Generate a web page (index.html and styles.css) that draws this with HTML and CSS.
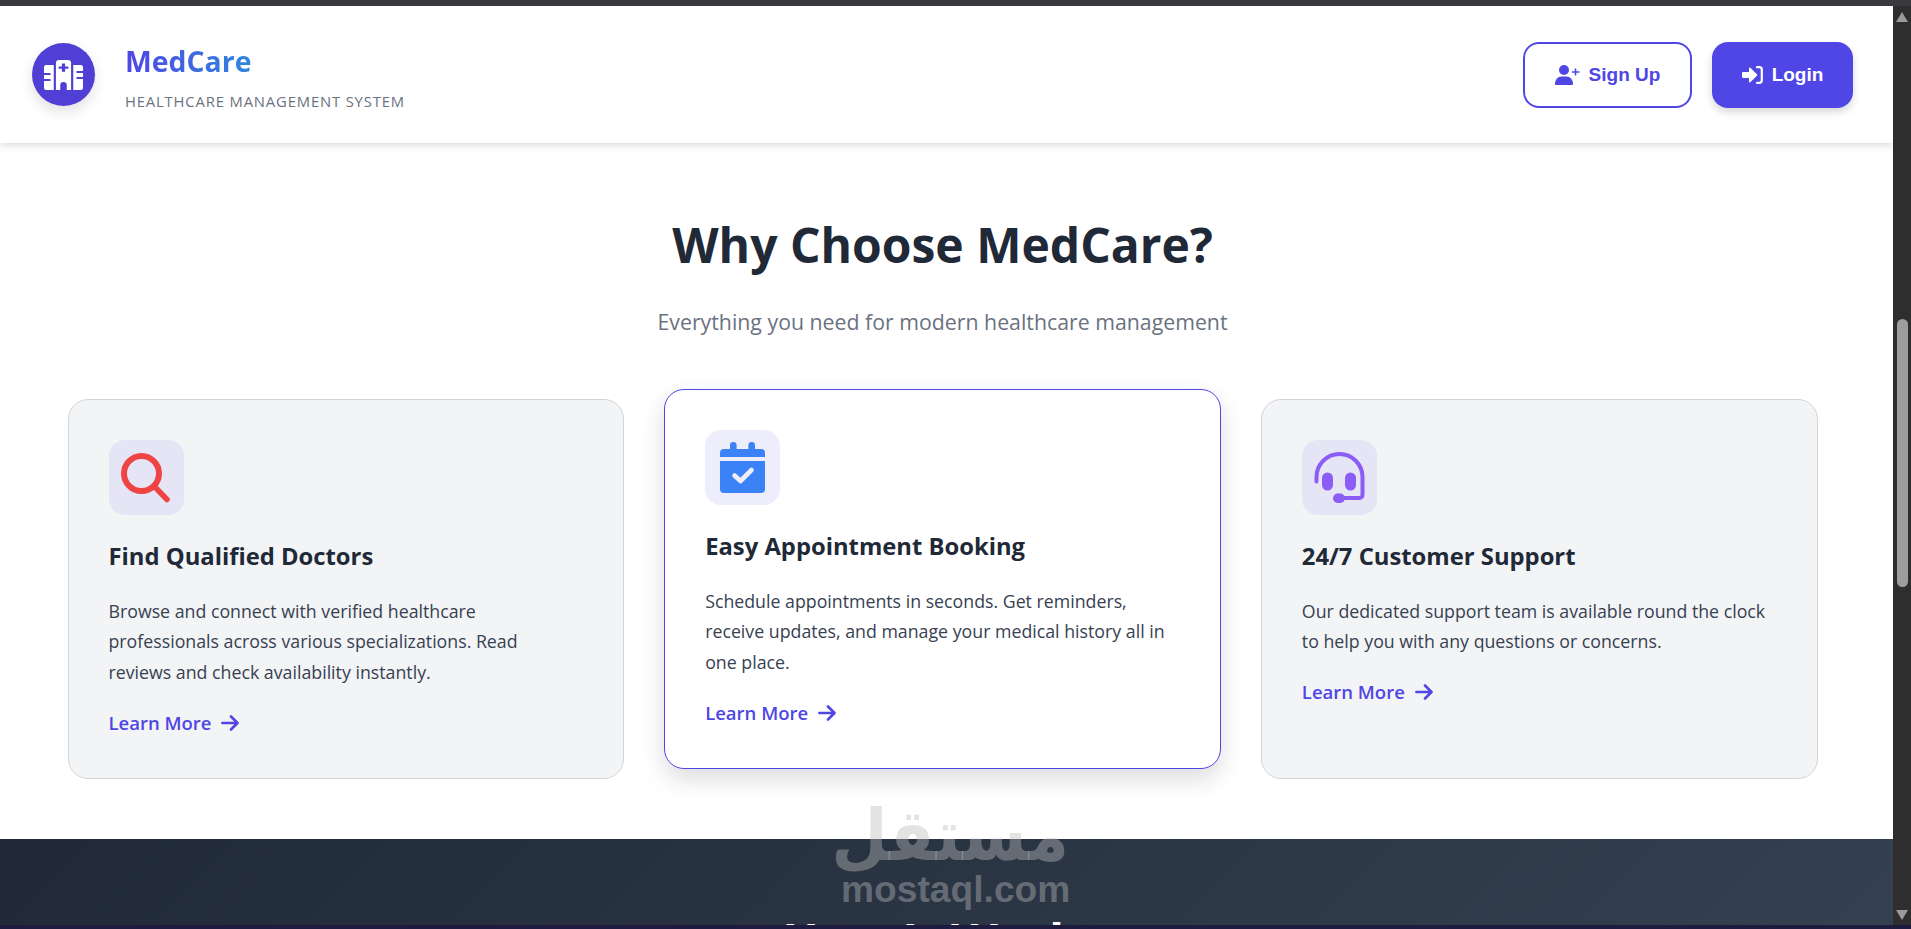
FILE: index.html
```html
<!DOCTYPE html>
<html lang="en">

<head>
    <meta charset="UTF-8">
    <meta name="viewport" content="width=device-width, initial-scale=1.0">
    <title>MedCare</title>
    <link rel="stylesheet" href="styles.css">
</head>

<body>
    <div class="topline"></div>
    <div class="window">
        <div class="page">
            <header class="header">
                <div class="brand">
                    <div class="logo">
                        <svg width="39" height="30" viewBox="0 0 36 30" preserveAspectRatio="none">
                            <path fill="#fff" fill-rule="evenodd" d="M11 3a3 3 0 0 1 3-3h8a3 3 0 0 1 3 3v27h-4v-5a3 3 0 0 0-6 0v5h-4zM16.500 3.500v3h-3v2.200h3v3h3v-3h3V6.500h-3v-3zM0 7a2 2 0 0 1 2-2h7v25H2a2 2 0 0 1-2-2v-7h6v-2H0v-4h6v-2H0zM27 5h7a2 2 0 0 1 2 2v4h-6v2h6v4h-6v2h6v9a2 2 0 0 1-2 2h-7z" />
                        </svg>
                    </div>
                    <div class="brand-text">
                        <div class="brand-name">MedCare</div>
                        <div class="brand-sub">HEALTHCARE MANAGEMENT SYSTEM</div>
                    </div>
                </div>
                <div class="actions">
                    <button class="btn btn-outline">
                        <svg width="25" height="20" viewBox="0 0 25 20">
                            <circle cx="9" cy="5" r="5" fill="#4f46e5" />
                            <path fill="#4f46e5" d="M0 19c0-4.500 3-7.500 6.500-7.500h5c3.500 0 6.500 3 6.500 7.500 0 .6-.4 1-1 1H1c-.6 0-1-.4-1-1z" />
                            <path stroke="#4f46e5" stroke-width="1.600" d="M20.500 3.500v7M17 7h7.500" />
                        </svg>
                        Sign Up
                    </button>
                    <button class="btn btn-solid">
                        <svg width="21" height="18" viewBox="0 0 21 18">
                            <path fill="#fff" d="M7 2.500v3.500H1.200C.5 6 0 6.500 0 7.200v3.600c0 .7.500 1.200 1.200 1.200H7v3.500c0 .8 1 1.200 1.600.6l6.500-6.500a1 1 0 0 0 0-1.200L8.600 1.900C8 1.300 7 1.700 7 2.500z" />
                            <path fill="none" stroke="#fff" stroke-width="2.200" stroke-linecap="round" d="M15 1.200h2.300c1.400 0 2.500 1.100 2.500 2.500v10.600c0 1.400-1.100 2.500-2.500 2.500H15" />
                        </svg>
                        Login
                    </button>
                </div>
            </header>

            <section class="why">
                <h1>Why Choose MedCare?</h1>
                <p class="lead">Everything you need for modern healthcare management</p>
                <div class="cards">
                    <div class="card">
                        <div class="icon-box">
                            <svg width="50" height="50" viewBox="0 0 50 50">
                                <circle cx="20.500" cy="20.500" r="17.500" fill="none" stroke="#ef4444" stroke-width="6" />
                                <path stroke="#ef4444" stroke-width="5.500" stroke-linecap="round" d="M33 33l13 13.500" />
                            </svg>
                        </div>
                        <h3>Find Qualified Doctors</h3>
                        <p>Browse and connect with verified healthcare professionals across various specializations. Read reviews and check availability instantly.</p>
                        <a class="more">Learn More
                            <svg width="18" height="16" viewBox="0 0 18 16">
                                <path fill="none" stroke="#4f46e5" stroke-width="2.600" stroke-linecap="round" stroke-linejoin="round" d="M1.400 8h15M10 1.500L16.500 8 10 14.500" />
                            </svg>
                        </a>
                    </div>
                    <div class="card card-active">
                        <div class="icon-box">
                            <svg width="45" height="51" viewBox="0 0 45 51">
                                <path fill="#3b82f6" d="M10 3.300a3.300 3.300 0 0 1 6.600 0V7h11.800V3.300a3.300 3.300 0 0 1 6.600 0V7h6a4 4 0 0 1 4 4v4H0v-4a4 4 0 0 1 4-4h6zM0 19h45v28a4 4 0 0 1-4 4H4a4 4 0 0 1-4-4z" />
                                <path fill="none" stroke="#eeedfb" stroke-width="4.600" stroke-linecap="round" stroke-linejoin="round" d="M14.500 33.500l6 5.500 11-11" />
                            </svg>
                        </div>
                        <h3>Easy Appointment Booking</h3>
                        <p>Schedule appointments in seconds. Get reminders, receive updates, and manage your medical history all in one place.</p>
                        <a class="more">Learn More
                            <svg width="18" height="16" viewBox="0 0 18 16">
                                <path fill="none" stroke="#4f46e5" stroke-width="2.600" stroke-linecap="round" stroke-linejoin="round" d="M1.400 8h15M10 1.500L16.500 8 10 14.500" />
                            </svg>
                        </a>
                    </div>
                    <div class="card">
                        <div class="icon-box">
                            <svg width="51" height="51" viewBox="0 0 51 51">
                                <path fill="none" stroke="#8b5cf6" stroke-width="4" stroke-linecap="round" stroke-linejoin="round" d="M2.500 29.500V25a23 23 0 0 1 46 0v18a3 3 0 0 1-3 3H25" />
                                <rect x="8" y="20.500" width="11" height="18" rx="5.500" fill="#8b5cf6" />
                                <rect x="31" y="20.500" width="11" height="18" rx="5.500" fill="#8b5cf6" />
                                <rect x="19" y="41.500" width="12" height="9.500" rx="4.700" fill="#8b5cf6" />
                            </svg>
                        </div>
                        <h3>24/7 Customer Support</h3>
                        <p>Our dedicated support team is available round the clock to help you with any questions or concerns.</p>
                        <a class="more">Learn More
                            <svg width="18" height="16" viewBox="0 0 18 16">
                                <path fill="none" stroke="#4f46e5" stroke-width="2.600" stroke-linecap="round" stroke-linejoin="round" d="M1.400 8h15M10 1.500L16.500 8 10 14.500" />
                            </svg>
                        </a>
                    </div>
                </div>
            </section>

            <section class="how">
                <h2>How It Works</h2>
            </section>
        </div>
        <div class="scrollbar">
            <div class="arrow arrow-up"></div>
            <div class="track"><div class="thumb"></div></div>
            <div class="arrow arrow-down"></div>
        </div>
    </div>
    <div class="bottomline"></div>

    <div class="watermark">
        <div class="wm-ar" dir="rtl" lang="ar">مستقل</div>
        <div class="wm-en">mostaql.com</div>
    </div>
</body>

</html>
```

FILE: styles.css
```css
* {
    box-sizing: border-box;
}

html,
body {
    height: 100%;
}

body {
    margin: 0;
    display: flex;
    flex-direction: column;
    overflow: hidden;
    background-color: #ffffff;
    font-family: "Open Sans", "Noto Sans", sans-serif;
    color: #1f2937;
}

.topline {
    height: 6px;
    flex-shrink: 0;
    background-color: #3a393e;
}

.bottomline {
    height: 4px;
    flex-shrink: 0;
    background-color: #1e1b3f;
}

.window {
    display: flex;
    flex: 1;
    min-height: 0;
}

.page {
    flex: 1;
    min-width: 0;
    display: flex;
    flex-direction: column;
    overflow: hidden;
}

/* header */
.header {
    height: 137px;
    flex-shrink: 0;
    display: flex;
    align-items: center;
    justify-content: space-between;
    padding: 0 40px 0 32px;
    background-color: #ffffff;
    box-shadow: 0 2px 8px rgba(0, 0, 0, 0.16);
    position: relative;
}

.brand {
    display: flex;
    align-items: center;
    gap: 30px;
}

.logo {
    width: 63px;
    height: 63px;
    border-radius: 50%;
    display: flex;
    align-items: center;
    justify-content: center;
    background-color: #4f3fd4;
    box-shadow: 0 6px 14px rgba(0, 0, 0, 0.12);
}

.brand-text {
    padding-top: 4px;
}

.brand-name {
    font-size: 28.4px;
    font-weight: 700;
    line-height: 36px;
    color: #3f63e0;
    background: linear-gradient(90deg, #4f46e5, #2f86dc);
    -webkit-background-clip: text;
    background-clip: text;
    -webkit-text-fill-color: transparent;
    width: fit-content;
}

.brand-sub {
    margin-top: 12px;
    font-size: 14.8px;
    letter-spacing: 0.85px;
    line-height: 20px;
    color: #6b7280;
}

.actions {
    display: flex;
    gap: 20px;
}

.btn {
    height: 66px;
    display: flex;
    align-items: center;
    justify-content: center;
    gap: 9px;
    border-radius: 16px;
    font-family: "Liberation Sans", Arial, sans-serif;
    font-size: 19px;
    font-weight: 700;
}

.btn-outline {
    width: 169px;
    background-color: #ffffff;
    border: 2px solid #4f46e5;
    color: #4f46e5;
}

.btn-solid {
    width: 141px;
    background-color: #4f46e5;
    border: none;
    color: #ffffff;
    box-shadow: 0 4px 8px rgba(0, 0, 0, 0.16);
}

/* why section */
.why {
    flex: 1;
    min-height: 0;
    padding: 68px 75.5px 0 67.5px;
    text-align: center;
}

h1 {
    margin: 0;
    font-size: 48px;
    font-weight: 700;
    line-height: 68px;
    color: #1f2937;
}

.lead {
    margin: 28px 0 0;
    font-size: 21.3px;
    line-height: 30px;
    color: #6b7280;
}

.cards {
    display: grid;
    grid-template-columns: repeat(3, 1fr);
    gap: 40px;
    align-items: start;
    margin-top: 62px;
    text-align: left;
}

.card {
    height: 380px;
    padding: 40px;
    border: 1px solid #d1d5db;
    border-radius: 20px;
    background-color: #f3f4f6;
}

.card-active {
    margin-top: -10px;
    border-color: #4f46e5;
    background-color: #ffffff;
    box-shadow: 0 10px 24px rgba(0, 0, 0, 0.14);
}

.icon-box {
    width: 75px;
    height: 75px;
    display: flex;
    align-items: center;
    justify-content: center;
    border-radius: 16px;
    background-color: #e5e5f5;
}

.card-active .icon-box {
    background-color: #eeedfb;
}

h3 {
    margin: 23.5px 0 0;
    font-size: 23.8px;
    font-weight: 700;
    line-height: 34px;
    color: #1f2937;
}

.card p {
    margin: 23.5px 0 0;
    font-size: 17.75px;
    line-height: 30.4px;
    color: #374151;
}

.more {
    display: flex;
    align-items: center;
    gap: 10px;
    margin-top: 20.5px;
    font-size: 18.5px;
    font-weight: 600;
    line-height: 30px;
    color: #4f46e5;
}

/* dark band */
.how {
    height: 86px;
    flex-shrink: 0;
    overflow: hidden;
    padding: 77px 8px 0 0;
    text-align: center;
    background: linear-gradient(135deg, #1f2937, #354050);
}

h2 {
    margin: 0;
    font-size: 48px;
    font-weight: 700;
    line-height: 50px;
    color: #ffffff;
}

/* fake scrollbar of the screenshot */
.scrollbar {
    width: 18px;
    flex-shrink: 0;
    display: flex;
    flex-direction: column;
    align-items: center;
    background-color: #2e2e2e;
}

.track {
    flex: 1;
    width: 100%;
    padding-top: 292px;
}

.thumb {
    width: 11px;
    height: 268px;
    margin: 0 auto;
    border-radius: 6px;
    background-color: #9d9f9d;
}

.arrow {
    width: 0;
    height: 0;
    margin: 6px 0 5px;
    border-left: 6px solid transparent;
    border-right: 6px solid transparent;
}

.arrow-up {
    border-bottom: 10px solid #9a9a9a;
}

.arrow-down {
    border-top: 10px solid #9a9a9a;
}

/* watermark lies over the page */
.watermark {
    position: absolute;
    left: 841px;
    top: 798px;
    width: 228px;
    text-align: center;
    color: rgba(187, 187, 187, 0.41);
    pointer-events: none;
}

.wm-ar {
    margin-left: 6px;
    font-family: "DejaVu Sans", sans-serif;
    font-size: 65px;
    font-weight: 700;
    line-height: 76px;
    transform: scaleY(1.1);
}

.wm-en {
    font-family: "Liberation Sans", Arial, sans-serif;
    font-size: 37.2px;
    font-weight: 700;
    line-height: 30px;
}
```
